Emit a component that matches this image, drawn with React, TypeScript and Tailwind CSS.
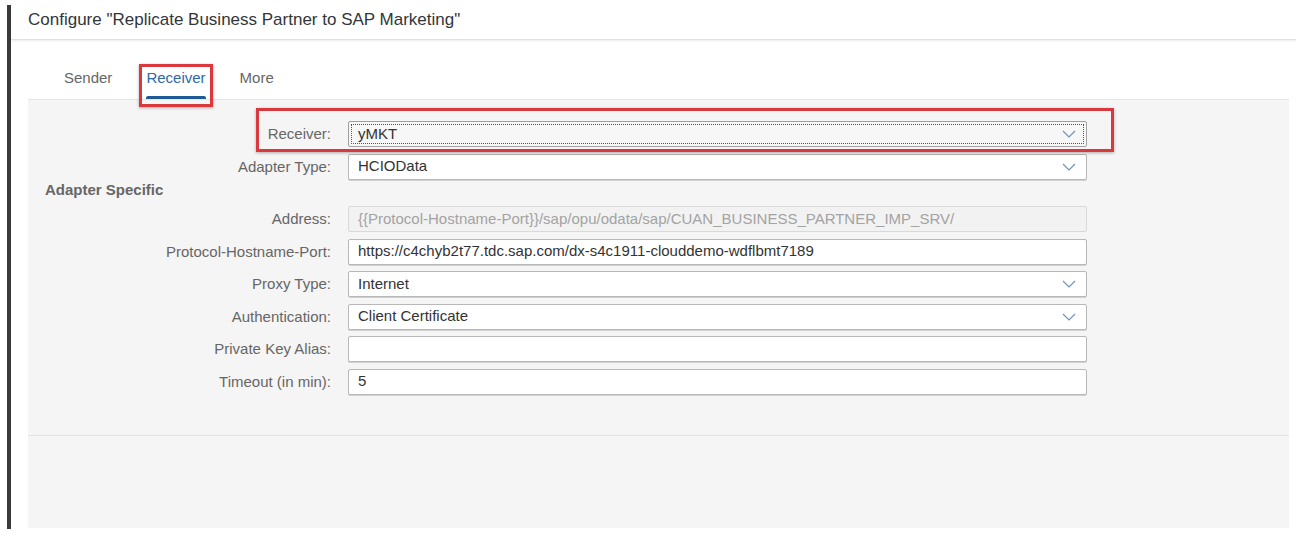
import React from "react";

const Chevron = () => (
  <svg width="14" height="8" viewBox="0 0 14 8" className="shrink-0">
    <polyline points="1,1 7,7 13,1" fill="none" stroke="#7093b8" strokeWidth="1.2" />
  </svg>
);

type Row = { label: string; value: string; select?: boolean; disabled?: boolean; focus?: boolean };

const Field = ({ r }: { r: Row }) => (
  <>
    <div className="text-right text-[15px] text-[#666] leading-[26px] h-[26px] whitespace-nowrap">{r.label}</div>
    <div
      className={
        "relative h-[26px] rounded-[2px] border flex items-center pl-[9px] pr-[10px] text-[15px] whitespace-nowrap overflow-hidden " +
        (r.disabled
          ? "bg-[#f2f2f2] border-[#d9d9d9] text-[#a3a3a3]"
          : r.focus
          ? "bg-[#f7f7f7] border-[#a0a0a0] text-[#333]"
          : "bg-white border-[#b8b8b8] shadow-[0_1px_0_#d0d0d0] text-[#333]")
      }
    >
      {r.focus && (
        <div className="absolute inset-[2px] border border-dotted border-[#555] pointer-events-none" />
      )}
      <span className="flex-1">{r.value}</span>
      {r.select && <Chevron />}
    </div>
  </>
);

export default function App() {
  const top: Row[] = [
    { label: "Receiver:", value: "yMKT", select: true, focus: true },
    { label: "Adapter Type:", value: "HCIOData", select: true },
  ];
  const rest: Row[] = [
    { label: "Address:", value: "{{Protocol-Hostname-Port}}/sap/opu/odata/sap/CUAN_BUSINESS_PARTNER_IMP_SRV/", disabled: true },
    { label: "Protocol-Hostname-Port:", value: "https://c4chyb2t77.tdc.sap.com/dx-s4c1911-clouddemo-wdflbmt7189" },
    { label: "Proxy Type:", value: "Internet", select: true },
    { label: "Authentication:", value: "Client Certificate", select: true },
    { label: "Private Key Alias:", value: "" },
    { label: "Timeout (in min):", value: "5" },
  ];
  return (
    <div
      className="relative w-[1296px] h-[536px] bg-white overflow-hidden flex"
      style={{ fontFamily: '"Liberation Sans", Arial, sans-serif' }}
    >
      <div className="w-[7px] shrink-0" />
      <div className="w-[4px] shrink-0 mt-[5px] h-[524px] bg-[#3a3a3a]" />
      <div className="flex-1 flex flex-col">
        <div className="h-[40px] border-b border-[#e2e2e2] shadow-[0_1px_2px_rgba(0,0,0,0.08)] flex items-center pl-[17px] pt-[1px]">
          <span className="text-[17px] text-[#32363a]">Configure "Replicate Business Partner to SAP Marketing"</span>
        </div>
        <div className="ml-[17px] mr-[7px] flex flex-col">
          <div className="h-[60px] flex items-end border-b border-[#e5e5e5] pl-[36px] gap-[34px]">
            <div className="h-[31px] flex flex-col items-center justify-between">
              <span className="text-[15px] text-[#666] leading-[20px]">Sender</span>
              <div className="h-[3px] w-full" />
            </div>
            <div className="h-[31px] flex flex-col items-center justify-between">
              <span className="text-[15px] text-[#2e6aa5] leading-[20px]">Receiver</span>
              <div className="h-[3px] w-full bg-[#1e5a96] rounded-t-[2px]" />
            </div>
            <div className="h-[31px] flex flex-col items-center justify-between">
              <span className="text-[15px] text-[#666] leading-[20px]">More</span>
              <div className="h-[3px] w-full" />
            </div>
          </div>
          <div className="bg-[#f5f5f5] h-[428px] flex flex-col">
            <div className="h-[336px] border-b border-[#e2e2e2] pt-[21px] pl-[17px]">
              <div className="grid grid-cols-[286px_739px] gap-x-[17px] gap-y-[6.5px]">
                {top.map((r) => (
                  <Field key={r.label} r={r} />
                ))}
              </div>
              <div className="h-[22px] mb-[4.5px] flex items-center text-[15px] font-bold text-[#666]">Adapter Specific</div>
              <div className="grid grid-cols-[286px_739px] gap-x-[17px] gap-y-[6.5px]">
                {rest.map((r) => (
                  <Field key={r.label} r={r} />
                ))}
              </div>
            </div>
          </div>
        </div>
      </div>
      <div className="absolute left-[139px] top-[64px] w-[74px] h-[43px] border-[3px] border-[#d9393d] shadow-[0_1px_3px_rgba(0,0,0,0.3)]" />
      <div className="absolute left-[256px] top-[108px] w-[858px] h-[44px] border-[3px] border-[#d9393d] shadow-[0_1px_3px_rgba(0,0,0,0.3)]" />
    </div>
  );
}
